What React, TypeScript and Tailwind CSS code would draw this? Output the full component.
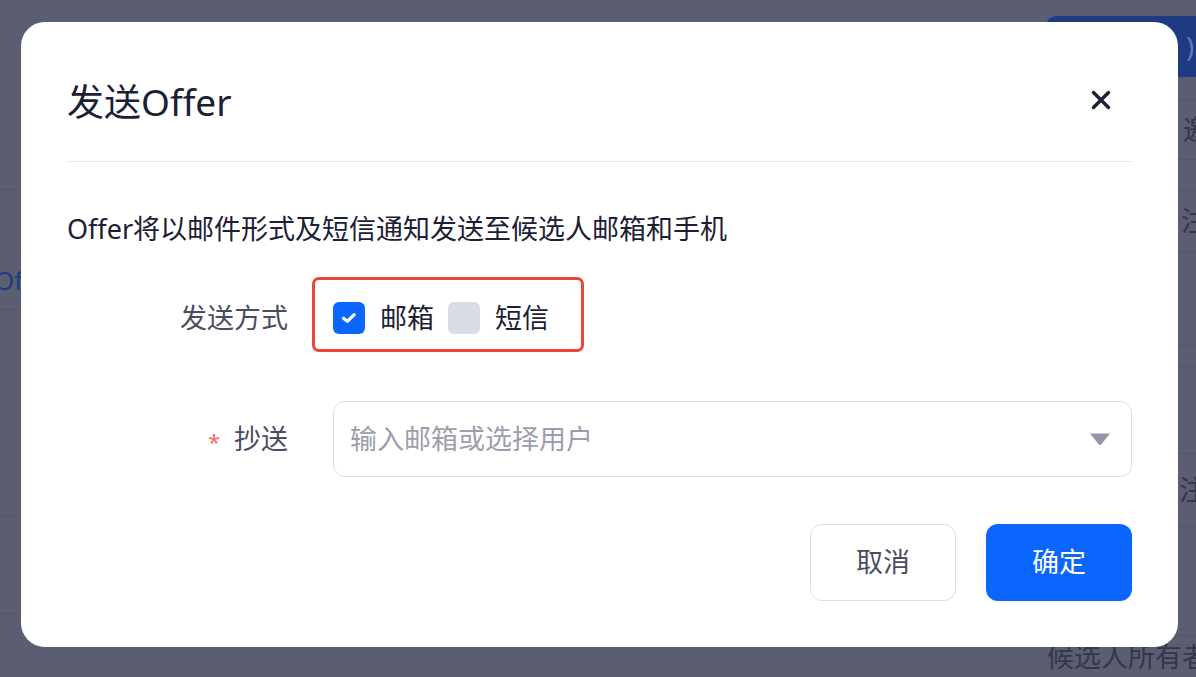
const font = "font-['Noto_Sans','Noto_Sans_CJK_SC',sans-serif]";

const marks = [
  { x: 70, y: 30 }, { x: 470, y: 20 }, { x: 870, y: 30 },
  { x: 60, y: 200 }, { x: 460, y: 190 }, { x: 860, y: 190 },
  { x: 60, y: 390 }, { x: 460, y: 380 }, { x: 860, y: 380 },
  { x: 60, y: 580 }, { x: 460, y: 570 }, { x: 860, y: 570 },
];

function Watermarks() {
  return (
    <div className="pointer-events-none absolute inset-0 overflow-hidden">
      {marks.map((m, i) => (
        <div
          key={i}
          className="absolute -rotate-[35deg] origin-top-left text-[21px] leading-[28px] text-black/[0.022] whitespace-nowrap"
          style={{ left: m.x, top: m.y + 130 }}
        >
          <div>潘炫文 2025-08-22 11:43</div>
          <div className="pl-[70px]">panxuanwen</div>
        </div>
      ))}
    </div>
  );
}

function Checkbox({ checked }: { checked: boolean }) {
  return checked ? (
    <span className="w-8 h-8 rounded-md bg-[#0a66ff] flex items-center justify-center">
      <svg width="20" height="20" viewBox="0 0 20 20" fill="none">
        <path d="M4.5 10.2L8.3 13.4L15.2 6.6" stroke="white" strokeWidth="3.2" strokeLinecap="round" strokeLinejoin="round" />
      </svg>
    </span>
  ) : (
    <span className="w-8 h-8 rounded-md bg-[#d9dce5]" />
  );
}

function PageBehind() {
  return (
    <div className="flex justify-between h-full text-[#34374a]">
      {/* left column of the page */}
      <div className="w-[22px] flex flex-col">
        <div className="h-[190px] border-b border-[#52556a]" />
        <div className="h-[120px] border-b border-[#52556a] flex items-end pb-[14px] overflow-hidden">
          <span className="text-[26px] leading-[30px] text-[#1f3a7e] -ml-[6px]">Offer</span>
        </div>
        <div className="h-[207px] border-b border-[#52556a]" />
        <div className="h-[97px] border-b border-[#52556a]" />
      </div>
      {/* right column of the page */}
      <div className="w-[150px] flex flex-col text-[27px] leading-[30px]">
        <div className="mt-[16px] h-[61px] rounded-l-[10px] bg-[#1d3a82] flex items-center justify-end pr-[2px] text-[#5f79b8]">
          <span>)</span>
        </div>
        <div className="h-[23px] border-b border-[#52556a]" />
        <div className="h-[60px] border-b border-[#52556a] flex items-center justify-end">
          <span className="-mr-[14px]">邀</span>
        </div>
        <div className="h-[31px] border-b border-[#52556a]" />
        <div className="h-[61px] border-b border-[#52556a] flex items-center justify-end">
          <span className="-mr-[12px]">注</span>
        </div>
        <div className="h-[94px] border-b border-[#52556a]" />
        <div className="h-[21px] border-b border-[#52556a]" />
        <div className="h-[87px] border-b border-[#52556a]" />
        <div className="h-[73px] border-b border-[#52556a] flex items-center justify-end">
          <span className="-mr-[10px]">注</span>
        </div>
        <div className="h-[109px] border-b border-[#52556a]" />
        <div className="pt-[6px] pl-[1px] whitespace-nowrap">候选人所有者</div>
      </div>
    </div>
  );
}

export default function App() {
  return (
    <div className={`${font} relative w-[1196px] h-[677px] overflow-hidden bg-[#5b5e70]`}>
      <PageBehind />

      {/* dialog */}
      <div className="absolute left-[21px] top-[22px] w-[1157px] h-[625px] rounded-[24px] bg-white px-[46px] pt-[58px] flex flex-col">
        <div className="flex items-center justify-between pb-[37px] border-b border-[#e3e5ee]">
          <h2 className="text-[37px] leading-[44px] text-[#1c2034]">发送Offer</h2>
          <button type="button" className="w-[30px] h-[30px] mr-[16px] -mt-[4px] flex items-center justify-center text-[#1c2034]">
            <svg width="20" height="20" viewBox="0 0 20 20" fill="none">
              <path d="M2.5 2.5L17.5 17.5M17.5 2.5L2.5 17.5" stroke="currentColor" strokeWidth="3.4" strokeLinecap="round" />
            </svg>
          </button>
        </div>

        <p className="mt-[49px] text-[27px] leading-[36px] text-[#1c2034] whitespace-nowrap">Offer将以邮件形式及短信通知发送至候选人邮箱和手机</p>

        <div className="mt-[33px] grid grid-cols-[221px_1fr] gap-x-[45px] gap-y-[45px] text-[27px]">
          <div className="h-[76px] flex items-center justify-end text-[#4a4d60]">发送方式</div>
          <div className="h-[76px] flex items-center">
            <div className="relative flex items-center">
              <div className="absolute -left-[21px] -top-[25px] -bottom-[18px] -right-[35px] border-[3px] border-[#ee4438] rounded-[7px]" />
              <Checkbox checked />
              <span className="ml-[15px] mr-[14px] text-[#1c2034] leading-[32px]">邮箱</span>
              <Checkbox checked={false} />
              <span className="ml-[15px] text-[#1c2034] leading-[32px]">短信</span>
            </div>
          </div>

          <div className="h-[76px] flex items-center justify-end text-[#4a4d60]">
            <span className="text-[#f56c6c] text-[22px] mr-[14px] mt-[4px]">*</span>
            <span>抄送</span>
          </div>
          <div className="h-[76px] rounded-[12px] border border-[#dcdee7] flex items-center justify-between pl-[16px] pr-[19px]">
            <span className="text-[#9c9eac]">输入邮箱或选择用户</span>
            <svg width="24" height="14" viewBox="0 0 24 14">
              <path d="M2 1.5H22L13.4 12.2Q12 13.8 10.6 12.2Z" fill="#9496a8" />
            </svg>
          </div>
        </div>

        <div className="mt-[47px] flex justify-end gap-[30px]">
          <button type="button" className="w-[146px] h-[77px] rounded-[12px] border border-[#dcdee7] text-[27px] text-[#4a4d60]">取消</button>
          <button type="button" className="w-[146px] h-[77px] rounded-[12px] bg-[#0a66ff] text-[27px] text-white">确定</button>
        </div>
      </div>

      <Watermarks />
    </div>
  );
}
